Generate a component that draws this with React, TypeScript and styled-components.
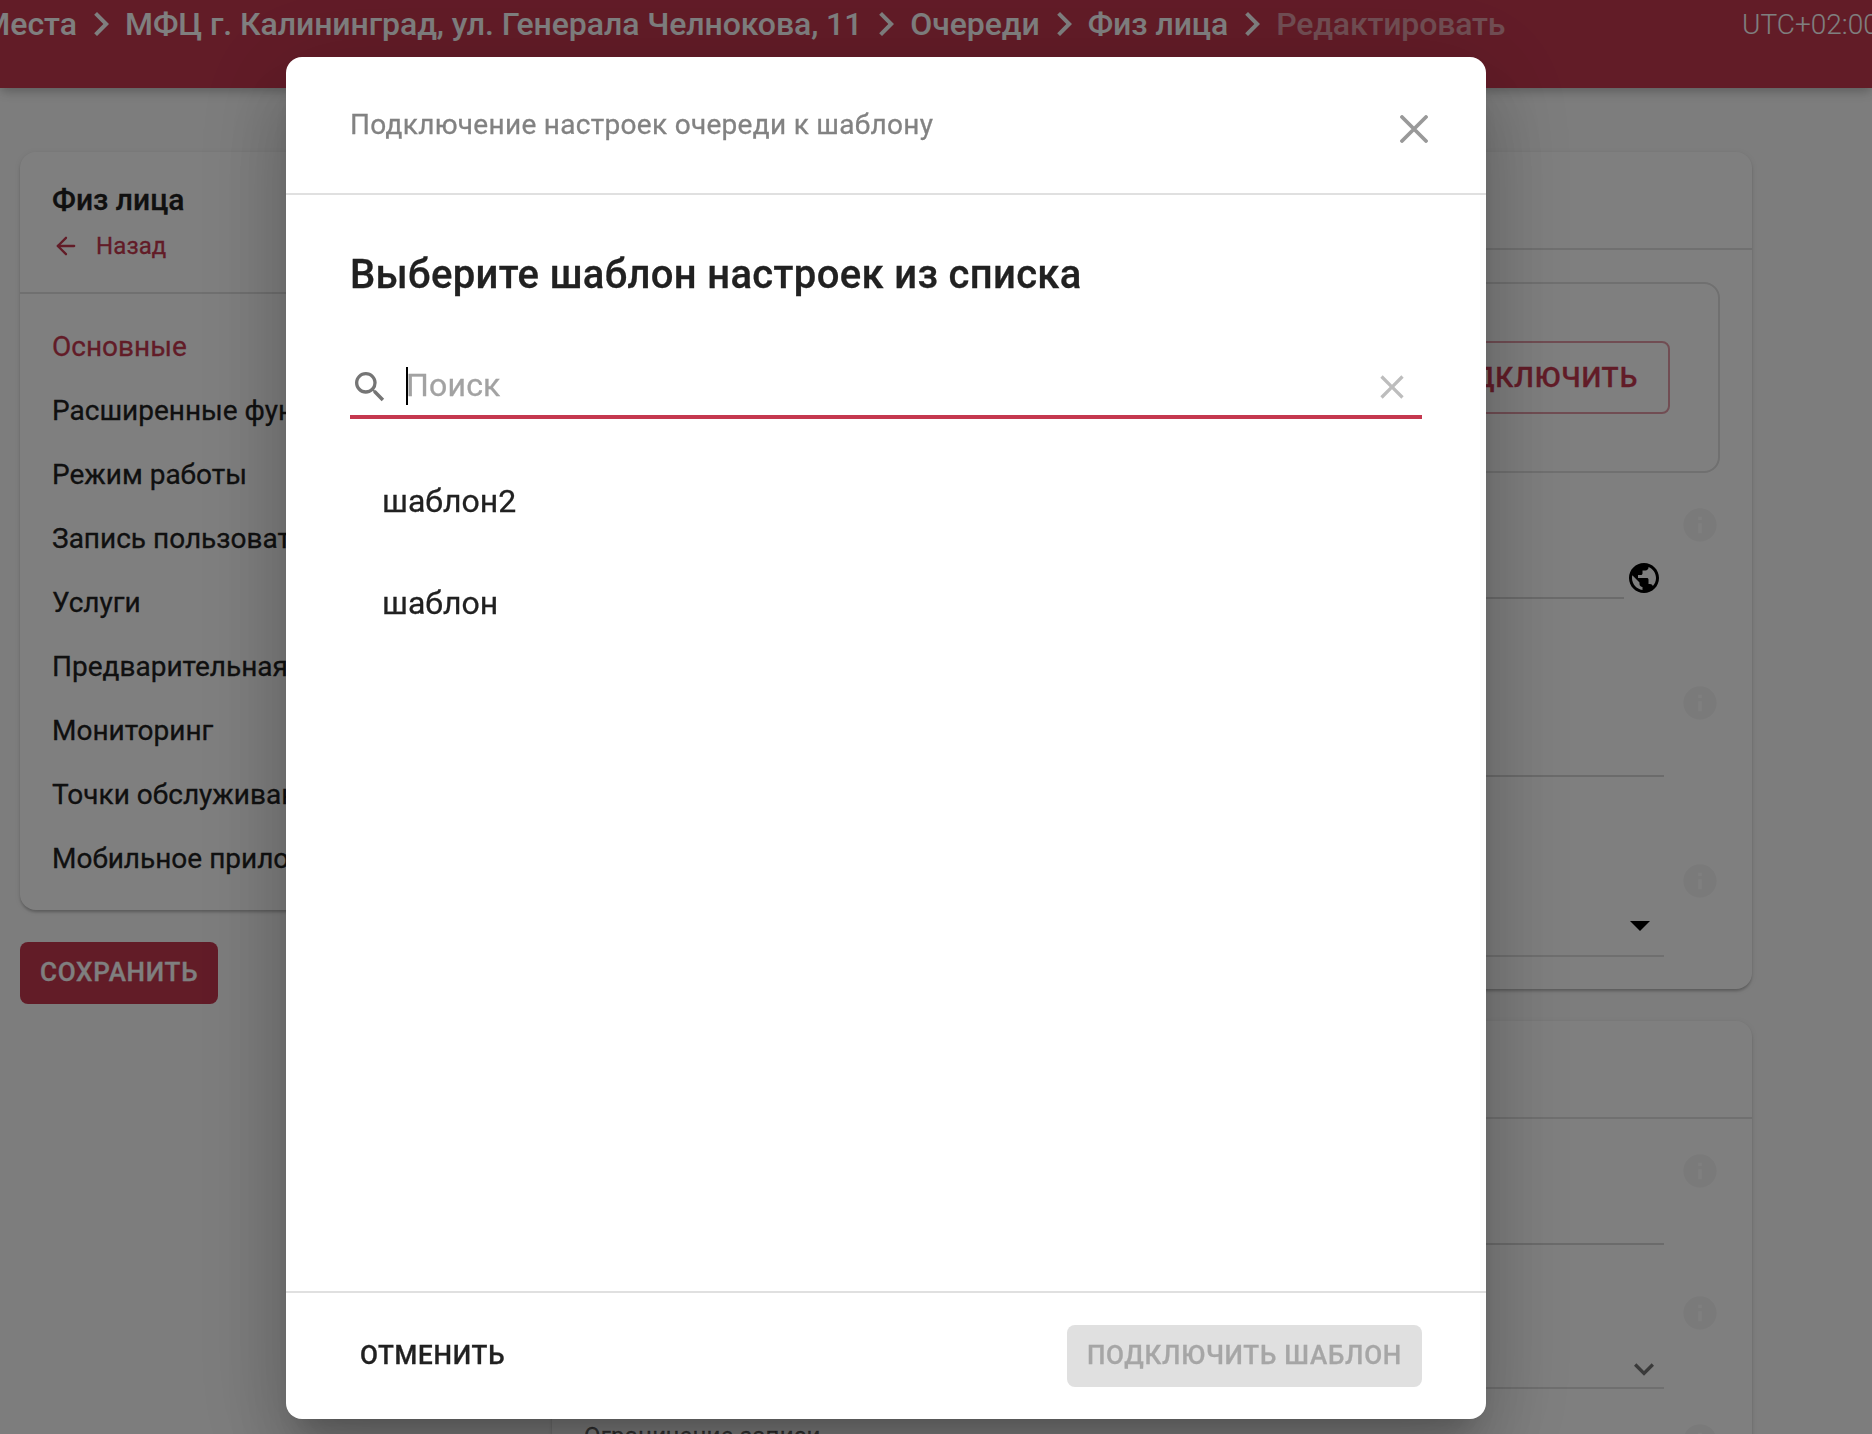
import React from "react";
import styled, { createGlobalStyle, css } from "styled-components";
import {
  MdArrowDropDown,
  MdChevronRight,
  MdClose,
  MdInfo,
  MdKeyboardArrowDown,
  MdPublic,
  MdSearch,
} from "react-icons/md";
import { ArrowLeft } from "lucide-react";

const primary = "#c5384f";
const ink = "#212121";
const divider = "#e0e0e0";

const GlobalStyle = createGlobalStyle`
  *, *::before, *::after { box-sizing: border-box; }
  html, body { margin: 0; height: 1434px; overflow: hidden; background: #fafafa; }
  body {
    font-family: Roboto, "Liberation Sans", sans-serif;
    color: ${ink};
    -webkit-text-stroke: 0.3px currentColor;
  }
  svg { display: block; flex-shrink: 0; }
  button { font-family: inherit; margin: 0; }
`;

const Page = styled.div`
  height: 1434px;
  overflow: hidden;
`;

/* ---------- top bar ---------- */

const TopBar = styled.header`
  position: relative;
  height: 88px;
  display: flex;
  align-items: flex-start;
  justify-content: space-between;
  background: ${primary};
  color: #fff;
  white-space: nowrap;
  -webkit-text-stroke: 0;
  box-shadow: 0 4px 8px -2px rgba(0, 0, 0, 0.14), 0 6px 10px rgba(0, 0, 0, 0.08),
    0 2px 16px rgba(0, 0, 0, 0.06);
`;

const Crumbs = styled.nav`
  height: 48px;
  display: flex;
  align-items: center;
  font-size: 32px;
  font-weight: 500;
  line-height: 48px;
`;

const FirstCrumb = styled.span`
  width: 77px;
  display: flex;
  justify-content: flex-end;
`;

const Crumb = styled.span<{ $muted?: boolean }>`
  opacity: ${(p) => (p.$muted ? 0.5 : 1)};
  letter-spacing: ${(p) => (p.$muted ? "-0.16px" : "-0.08px")};
`;

const Zone = styled.span`
  width: 130px;
  padding-top: 1px;
  font-size: 28px;
  font-weight: 300;
  line-height: 48px;
`;

/* ---------- page content ---------- */

const Content = styled.main`
  display: flex;
  align-items: flex-start;
  gap: 32px;
  padding: 64px 0 0 20px;
`;

const Side = styled.aside`
  width: 500px;
  display: flex;
  flex-direction: column;
  align-items: flex-start;
  gap: 32px;
`;

const Main = styled.section`
  width: 1200px;
  display: flex;
  flex-direction: column;
  gap: 32px;
`;

const Card = styled.div`
  width: 100%;
  background: #fff;
  border-radius: 16px;
  box-shadow: 0 3px 3px -1px rgba(0, 0, 0, 0.14), 0 2px 3px rgba(0, 0, 0, 0.1),
    0 1px 6px rgba(0, 0, 0, 0.08);
`;

const SideHead = styled.div`
  display: flex;
  flex-direction: column;
  gap: 10px;
  padding: 30px 32px 28px;
  border-bottom: 2px solid ${divider};
`;

const SideTitle = styled.h2`
  margin: 0;
  font-size: 30px;
  font-weight: 500;
  line-height: 36px;
`;

const Back = styled.a`
  display: flex;
  align-items: center;
  gap: 16px;
  color: ${primary};
  font-size: 24px;
  line-height: 36px;
  letter-spacing: 0.1px;
`;

const Menu = styled.ul`
  list-style: none;
  margin: 0;
  padding: 21px 32px 19px;
`;

const MenuItem = styled.li<{ $active?: boolean }>`
  font-size: 28px;
  line-height: 64px;
  white-space: nowrap;
  color: ${(p) => (p.$active ? primary : ink)};
`;

const CardHead = styled.div`
  height: 98px;
  border-bottom: 2px solid ${divider};
`;

const CardBody = styled.div<{ $gap: number }>`
  display: flex;
  flex-direction: column;
  gap: ${(p) => p.$gap}px;
  padding: 32px;
`;

const TemplateBox = styled.div`
  height: 191px;
  margin-bottom: -52px;
  padding: 0 48px;
  display: flex;
  align-items: center;
  justify-content: flex-end;
  border: 2px solid ${divider};
  border-radius: 16px;
`;

const Field = styled.div<{ $height: number; $raised?: boolean }>`
  height: ${(p) => p.$height}px;
  margin-top: ${(p) => (p.$raised ? -16 : 0)}px;
  display: flex;
  flex-direction: column;
  justify-content: space-between;
`;

const FieldTop = styled.div`
  height: 40px;
  flex-shrink: 0;
  display: flex;
  justify-content: space-between;
`;

const FieldLabel = styled.span`
  font-size: 24px;
  line-height: 30px;
  letter-spacing: 0.24px;
  color: rgba(0, 0, 0, 0.6);
`;

const InfoIcon = styled(MdInfo)`
  width: 40px;
  height: 40px;
  color: #f5f5f5;
`;

const Control = styled.div`
  display: flex;
  align-items: flex-end;
  gap: 2px;
  margin-right: 56px;
`;

const Line = styled.div<{ $soft?: boolean; $pad?: number }>`
  flex: 1;
  display: flex;
  justify-content: flex-end;
  padding-bottom: ${(p) => p.$pad ?? 0}px;
  border-bottom: 2px solid ${(p) => (p.$soft ? "#dedede" : "#d6d6d6")};
`;

const GlobeIcon = styled(MdPublic)`
  width: 36px;
  height: 36px;
  margin: 0 2px 3px 0;
  color: #000;
`;

const SelectIcon = styled(MdKeyboardArrowDown)`
  width: 40px;
  height: 40px;
  margin-bottom: -2px;
  color: #757575;
`;

/* ---------- buttons ---------- */

const Button = styled.button<{ $kind: "primary" | "disabled" | "text" | "outlined" }>`
  height: 62px;
  padding: 0 20px 2px;
  border: 0;
  border-radius: 8px;
  font-size: 26px;
  font-weight: 500;
  letter-spacing: 0.74px;
  white-space: nowrap;
  ${(p) => p.$kind === "primary" && css`background: ${primary}; color: #fff;`}
  ${(p) => p.$kind === "disabled" && css`background: #e0e0e0; color: #a6a6a6;`}
  ${(p) => p.$kind === "text" && css`background: transparent; color: ${ink}; padding: 0 10px 2px;`}
  ${(p) =>
    p.$kind === "outlined" &&
    css`
      height: 73px;
      padding: 0 30px;
      border: 2px solid rgba(197, 56, 79, 0.5);
      background: transparent;
      color: ${primary};
      font-size: 28px;
      letter-spacing: 0.8px;
    `}
`;

/* ---------- dialog ---------- */

const Backdrop = styled.div`
  position: fixed;
  inset: 0;
  display: flex;
  justify-content: center;
  align-items: flex-start;
  padding: 57px 100px 0 0;
  background: rgba(0, 0, 0, 0.5);
`;

const Dialog = styled.div`
  width: 1200px;
  height: 1362px;
  display: flex;
  flex-direction: column;
  background: #fff;
  border-radius: 16px;
  box-shadow: 0 22px 30px -14px rgba(0, 0, 0, 0.2), 0 48px 76px 6px rgba(0, 0, 0, 0.14),
    0 18px 92px 16px rgba(0, 0, 0, 0.12);
`;

const DialogHead = styled.div`
  height: 138px;
  display: flex;
  align-items: center;
  justify-content: space-between;
  padding: 0 58px 0 64px;
  border-bottom: 2px solid ${divider};
`;

const DialogCaption = styled.span`
  font-size: 28px;
  line-height: 36px;
  letter-spacing: 0.3px;
  color: #828282;
`;

const CloseIcon = styled.svg`
  width: 28px;
  height: 28px;
  margin-top: 8px;
  stroke: #999;
  stroke-width: 3.8;
  stroke-linecap: round;
`;

const DialogBody = styled.div`
  flex: 1;
  padding: 56px 64px 0;
`;

const DialogTitle = styled.h1`
  margin: 0 0 60px;
  font-size: 40px;
  font-weight: 500;
  line-height: 48px;
  letter-spacing: 0.35px;
`;

const SearchField = styled.div`
  height: 60px;
  display: flex;
  align-items: center;
  padding-right: 10px;
  border-bottom: 4px solid ${primary};
`;

const SearchIcon = styled(MdSearch)`
  width: 40px;
  height: 40px;
  color: #757575;
`;

const InputWrap = styled.div`
  position: relative;
  flex: 1;
  margin-left: 16px;
  padding-bottom: 4px;
  font-size: 32px;
  line-height: 36px;
  letter-spacing: 0.2px;
  color: #a2a2a2;
`;

const Caret = styled.span`
  position: absolute;
  left: 0;
  top: 0;
  width: 2px;
  height: 38px;
  background: #000;
`;

const ClearIcon = styled(MdClose)`
  width: 40px;
  height: 40px;
  color: #bdbdbd;
`;

const Options = styled.ul`
  list-style: none;
  margin: 31px 0 0;
  padding: 0 32px;
`;

const Option = styled.li`
  font-size: 32px;
  line-height: 102px;
`;

const DialogFoot = styled.div`
  height: 128px;
  display: flex;
  align-items: center;
  justify-content: space-between;
  padding: 0 64px;
  border-top: 2px solid ${divider};
`;

const menu = [
  "Основные",
  "Расширенные функции",
  "Режим работы",
  "Запись пользователей",
  "Услуги",
  "Предварительная запись",
  "Мониторинг",
  "Точки обслуживания",
  "Мобильное приложение",
];

export default function App() {
  return (
    <Page>
      <GlobalStyle />
      <TopBar>
        <Crumbs>
          <FirstCrumb>Места</FirstCrumb>
          <MdChevronRight size={48} />
          <Crumb>МФЦ г. Калининград, ул. Генерала Челнокова, 11</Crumb>
          <MdChevronRight size={48} />
          <Crumb>Очереди</Crumb>
          <MdChevronRight size={48} />
          <Crumb>Физ лица</Crumb>
          <MdChevronRight size={48} />
          <Crumb $muted>Редактировать</Crumb>
        </Crumbs>
        <Zone>UTC+02:00</Zone>
      </TopBar>

      <Content>
        <Side>
          <Card>
            <SideHead>
              <SideTitle>Физ лица</SideTitle>
              <Back>
                <ArrowLeft size={28} strokeWidth={2} />
                Назад
              </Back>
            </SideHead>
            <Menu>
              {menu.map((label, i) => (
                <MenuItem key={label} $active={i === 0}>
                  {label}
                </MenuItem>
              ))}
            </Menu>
          </Card>
          <Button $kind="primary">СОХРАНИТЬ</Button>
        </Side>

        <Main>
          <Card>
            <CardHead />
            <CardBody $gap={84}>
              <TemplateBox>
                <Button $kind="outlined">ПОДКЛЮЧИТЬ</Button>
              </TemplateBox>
              <Field $height={94}>
                <FieldTop>
                  <FieldLabel />
                  <InfoIcon />
                </FieldTop>
                <Control>
                  <Line />
                  <GlobeIcon />
                </Control>
              </Field>
              <Field $height={94}>
                <FieldTop>
                  <FieldLabel />
                  <InfoIcon />
                </FieldTop>
                <Control>
                  <Line />
                </Control>
              </Field>
              <Field $height={96}>
                <FieldTop>
                  <FieldLabel />
                  <InfoIcon />
                </FieldTop>
                <Control>
                  <Line $soft $pad={6}>
                    <MdArrowDropDown size={48} color="#000" />
                  </Line>
                </Control>
              </Field>
            </CardBody>
          </Card>

          <Card>
            <CardHead />
            <CardBody $gap={48}>
              <Field $height={94}>
                <FieldTop>
                  <FieldLabel />
                  <InfoIcon />
                </FieldTop>
                <Control>
                  <Line />
                </Control>
              </Field>
              <Field $height={96}>
                <FieldTop>
                  <FieldLabel />
                  <InfoIcon />
                </FieldTop>
                <Control>
                  <Line $soft>
                    <SelectIcon />
                  </Line>
                </Control>
              </Field>
              <Field $height={96} $raised>
                <FieldTop>
                  <FieldLabel>Ограничение записи</FieldLabel>
                  <InfoIcon />
                </FieldTop>
              </Field>
            </CardBody>
          </Card>
        </Main>
      </Content>

      <Backdrop>
        <Dialog role="dialog">
          <DialogHead>
            <DialogCaption>Подключение настроек очереди к шаблону</DialogCaption>
            <CloseIcon viewBox="0 0 28 28">
              <path d="M2 2 26 26M26 2 2 26" />
            </CloseIcon>
          </DialogHead>
          <DialogBody>
            <DialogTitle>Выберите шаблон настроек из списка</DialogTitle>
            <SearchField>
              <SearchIcon />
              <InputWrap>
                Поиск
                <Caret />
              </InputWrap>
              <ClearIcon />
            </SearchField>
            <Options>
              <Option>шаблон2</Option>
              <Option>шаблон</Option>
            </Options>
          </DialogBody>
          <DialogFoot>
            <Button $kind="text">ОТМЕНИТЬ</Button>
            <Button $kind="disabled">ПОДКЛЮЧИТЬ ШАБЛОН</Button>
          </DialogFoot>
        </Dialog>
      </Backdrop>
    </Page>
  );
}
